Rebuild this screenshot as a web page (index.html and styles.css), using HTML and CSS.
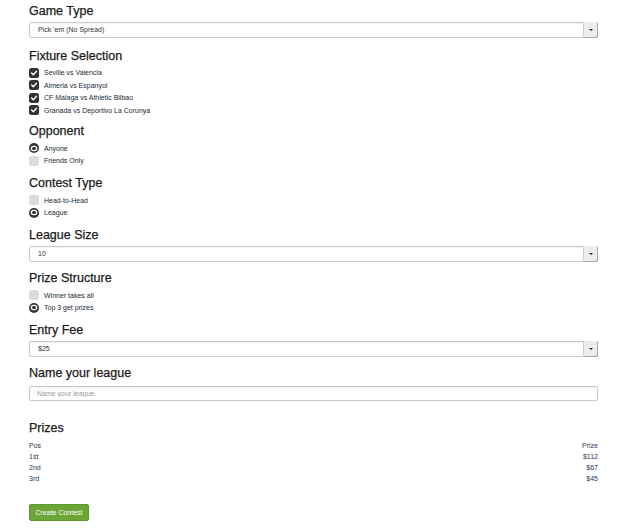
FILE: index.html
```html
<!DOCTYPE html>
<html>
<head>
<meta charset="utf-8">
<link rel="stylesheet" href="styles.css">
</head>
<body>
<form class="form">
  <section class="section section-first">
    <h3 class="heading">Game Type</h3>
    <div class="select"><span class="select-text">Pick 'em (No Spread)</span><span class="select-btn"><span class="caret"></span></span></div>
  </section>

  <section class="section section-fixtures">
    <h3 class="heading">Fixture Selection</h3>
    <div class="option"><span class="box checked"><svg viewBox="0 0 10 10" width="10" height="10"><path d="M2.6 5.1 L4.3 6.7 L7.5 3.3" fill="none" stroke="#fff" stroke-width="1.4" stroke-linecap="round" stroke-linejoin="round"/></svg></span><span class="label">Seville vs Valencia</span></div>
    <div class="option"><span class="box checked"><svg viewBox="0 0 10 10" width="10" height="10"><path d="M2.6 5.1 L4.3 6.7 L7.5 3.3" fill="none" stroke="#fff" stroke-width="1.4" stroke-linecap="round" stroke-linejoin="round"/></svg></span><span class="label">Almeria vs Espanyol</span></div>
    <div class="option"><span class="box checked"><svg viewBox="0 0 10 10" width="10" height="10"><path d="M2.6 5.1 L4.3 6.7 L7.5 3.3" fill="none" stroke="#fff" stroke-width="1.4" stroke-linecap="round" stroke-linejoin="round"/></svg></span><span class="label">CF Malaga vs Athletic Bilbao</span></div>
    <div class="option"><span class="box checked"><svg viewBox="0 0 10 10" width="10" height="10"><path d="M2.6 5.1 L4.3 6.7 L7.5 3.3" fill="none" stroke="#fff" stroke-width="1.4" stroke-linecap="round" stroke-linejoin="round"/></svg></span><span class="label">Granada vs Deportivo La Corunya</span></div>
  </section>

  <section class="section">
    <h3 class="heading">Opponent</h3>
    <div class="option"><span class="radio on"></span><span class="label">Anyone</span></div>
    <div class="option"><span class="box"></span><span class="label">Friends Only</span></div>
  </section>

  <section class="section">
    <h3 class="heading">Contest Type</h3>
    <div class="option"><span class="box"></span><span class="label">Head-to-Head</span></div>
    <div class="option"><span class="radio on"></span><span class="label">League</span></div>
  </section>

  <section class="section">
    <h3 class="heading">League Size</h3>
    <div class="select"><span class="select-text">10</span><span class="select-btn"><span class="caret"></span></span></div>
  </section>

  <section class="section">
    <h3 class="heading">Prize Structure</h3>
    <div class="option"><span class="box"></span><span class="label">Winner takes all</span></div>
    <div class="option"><span class="radio on"></span><span class="label">Top 3 get prizes</span></div>
  </section>

  <section class="section">
    <h3 class="heading">Entry Fee</h3>
    <div class="select"><span class="select-text">$25</span><span class="select-btn"><span class="caret"></span></span></div>
  </section>

  <section class="section">
    <h3 class="heading heading-input">Name your league</h3>
    <input class="text-input" type="text" placeholder="Name your league">
  </section>

  <section class="section prizes">
    <h3 class="heading heading-table">Prizes</h3>
    <div class="prize-row head"><span>Pos</span><span>Prize</span></div>
    <div class="prize-row"><span>1st</span><span>$112</span></div>
    <div class="prize-row"><span>2nd</span><span>$67</span></div>
    <div class="prize-row"><span>3rd</span><span>$45</span></div>
  </section>

  <div class="actions">
    <button type="button" class="btn">Create Contest</button>
  </div>
</form>
</body>
</html>
```

FILE: styles.css
```css
* { box-sizing: border-box; }

html, body {
  margin: 0;
  background: #fff;
}

body {
  padding: 4px 27px 0 29px;
  font-family: "Liberation Sans", Arial, sans-serif;
  color: #333;
}

.form {
  display: flex;
  flex-direction: column;
}

.section {
  display: flex;
  flex-direction: column;
  margin-bottom: 9px;
}

.section-first { margin-bottom: 10.5px; }
.section-fixtures { margin-bottom: 7.5px; }

.heading {
  margin: 0 0 3px;
  font-size: 12.5px;
  line-height: 15px;
  font-weight: normal;
  color: #1a1a1a;
  -webkit-text-stroke: 0.25px #1a1a1a;
}

.heading-input { margin-bottom: 4.5px; }
.heading-table { margin-bottom: 4.5px; }

.select {
  display: flex;
  align-items: stretch;
  height: 16px;
  border: 1px solid #c8c8c8;
  border-radius: 2px;
  background: #fff;
  box-shadow: inset 0 1px 1px rgba(0,0,0,0.05);
}

.select-text {
  flex: 1;
  padding-left: 8px;
  font-size: 7px;
  line-height: 14px;
  color: #333;
}

.select-btn {
  width: 15px;
  display: flex;
  align-items: center;
  justify-content: center;
  background: #ececec;
  border-left: 1px solid #d0d0d0;
  box-shadow: inset -1px -1px 0 #a8a8a8;
  margin: -1px -1px -1px 0;
  border-radius: 0 2px 2px 0;
}

.caret {
  width: 0;
  height: 0;
  border-left: 2px solid transparent;
  border-right: 2px solid transparent;
  border-top: 2px solid #222;
  margin-top: -1px;
}

.option {
  display: flex;
  align-items: center;
  height: 12.5px;
}

.box {
  width: 10px;
  height: 10px;
  border-radius: 2.5px;
  background: #dcdcdc;
  display: flex;
  flex-shrink: 0;
}

.box.checked {
  background: #333;
}

.radio {
  width: 10px;
  height: 10px;
  border-radius: 50%;
  flex-shrink: 0;
  background: #333;
  display: flex;
  align-items: center;
  justify-content: center;
}

.radio.on::after {
  content: "";
  width: 3.4px;
  height: 3.4px;
  border-radius: 50%;
  background: #333;
  box-shadow: 0 0 0 1.3px #fff;
}

.label {
  margin-left: 5px;
  font-size: 7px;
  line-height: 9px;
  color: #222a36;
}

.text-input {
  height: 15px;
  width: 100%;
  border: 1px solid #c8c8c8;
  border-radius: 2px;
  padding: 0 7px;
  font-family: "Liberation Sans", Arial, sans-serif;
  font-size: 7px;
  color: #333;
  outline: none;
  box-shadow: inset 0 1px 1px rgba(0,0,0,0.05);
}

.text-input::placeholder { color: #999; }

.prizes { margin-top: 11px; }

.prize-row {
  display: flex;
  justify-content: space-between;
  height: 11px;
  align-items: center;
  font-size: 7px;
  color: #263a5c;
}

.prize-row.head { color: #2a3550; }

.actions {
  display: flex;
  margin-top: 11px;
}

.btn {
  width: 60px;
  height: 17px;
  padding: 0;
  background: #6aa536;
  border: 1px solid #5c9a2c;
  border-radius: 2px;
  color: #fff;
  font-family: "Liberation Sans", Arial, sans-serif;
  font-size: 7px;
  line-height: 15px;
  text-align: center;
}
```
